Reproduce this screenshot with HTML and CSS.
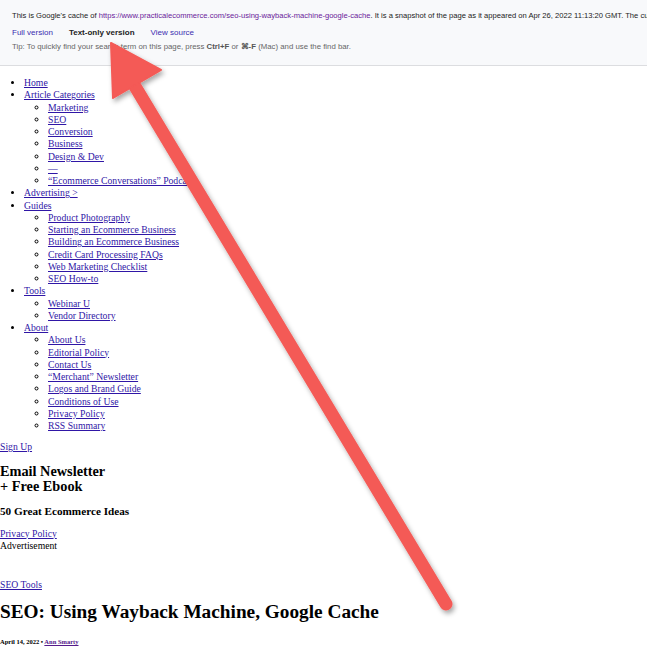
FILE: index.html
```html
<!DOCTYPE html>
<html>
<head>
<meta charset="utf-8">
<link rel="stylesheet" href="styles.css">
</head>
<body>
<div class="cache-bar">
  <div class="cache-line">This is Google's cache of <a class="cache-url" href="#">https://www.practicalecommerce.com/seo-using-wayback-machine-google-cache</a>. It is a snapshot of the page as it appeared on Apr 26, 2022 11:13:20 GMT. The current page could have changed in the meantime.</div>
  <div class="cache-links"><a href="#">Full version</a><span class="current">Text-only version</span><a href="#">View source</a></div>
  <div class="cache-tip">Tip: To quickly find your search term on this page, press <b>Ctrl+F</b> or <b>⌘-F</b> (Mac) and use the find bar.</div>
</div>

<div class="page">
  <nav class="menu">
    <ul class="lvl1">
      <li><a href="#">Home</a></li>
      <li><a href="#">Article Categories</a>
        <ul class="lvl2">
          <li><a href="#">Marketing</a></li>
          <li><a href="#">SEO</a></li>
          <li><a href="#">Conversion</a></li>
          <li><a href="#">Business</a></li>
          <li><a href="#">Design &amp; Dev</a></li>
          <li><a href="#">—</a></li>
          <li><a href="#">“Ecommerce Conversations” Podcast</a></li>
        </ul>
      </li>
      <li><a href="#">Advertising &gt;</a></li>
      <li><a href="#">Guides</a>
        <ul class="lvl2">
          <li><a href="#">Product Photography</a></li>
          <li><a href="#">Starting an Ecommerce Business</a></li>
          <li><a href="#">Building an Ecommerce Business</a></li>
          <li><a href="#">Credit Card Processing FAQs</a></li>
          <li><a href="#">Web Marketing Checklist</a></li>
          <li><a href="#">SEO How-to</a></li>
        </ul>
      </li>
      <li><a href="#">Tools</a>
        <ul class="lvl2">
          <li><a href="#">Webinar U</a></li>
          <li><a href="#">Vendor Directory</a></li>
        </ul>
      </li>
      <li><a href="#">About</a>
        <ul class="lvl2">
          <li><a href="#">About Us</a></li>
          <li><a href="#">Editorial Policy</a></li>
          <li><a href="#">Contact Us</a></li>
          <li><a href="#">“Merchant” Newsletter</a></li>
          <li><a href="#">Logos and Brand Guide</a></li>
          <li><a href="#">Conditions of Use</a></li>
          <li><a href="#">Privacy Policy</a></li>
          <li><a href="#">RSS Summary</a></li>
        </ul>
      </li>
    </ul>
  </nav>

  <div class="signup"><a href="#">Sign Up</a></div>
  <h2 class="news-title">Email Newsletter<br>+ Free Ebook</h2>
  <h3 class="news-sub">50 Great Ecommerce Ideas</h3>
  <div class="privacy"><a href="#">Privacy Policy</a></div>
  <div class="ad">Advertisement</div>

  <div class="crumb"><a href="#">SEO Tools</a></div>
  <h1 class="title">SEO: Using Wayback Machine, Google Cache</h1>
  <div class="meta">April 14, 2022 • <a href="#">Ann Smarty</a></div>
</div>

<svg class="arrow" width="647" height="664" viewBox="0 0 647 664">
  <defs>
    <filter id="shadow" x="-20%" y="-20%" width="140%" height="140%">
      <feDropShadow dx="2" dy="3" stdDeviation="2.5" flood-color="#000" flood-opacity="0.35"/>
    </filter>
  </defs>
  <g filter="url(#shadow)" fill="#f45a56" stroke="#f45a56">
    <line x1="130" y1="78" x2="446" y2="604" stroke-width="13" stroke-linecap="round"/>
    <polygon points="111,43 161,70 113,98" stroke-width="2" stroke-linejoin="round"/>
  </g>
</svg>
</body>
</html>
```

FILE: styles.css
```css
html, body {
  margin: 0;
  padding: 0;
  background: #fff;
}
body {
  width: 647px;
  height: 664px;
  overflow: hidden;
  position: relative;
  font-family: "Liberation Serif", "Times New Roman", serif;
  color: #000;
}
a {
  color: #2f16a6;
  text-decoration: underline;
}

.cache-bar {
  background: #f8f9fb;
  border-bottom: 1px solid #dcdde0;
  height: 66px;
  box-sizing: border-box;
  padding: 11px 0 0 12px;
  font-family: "Liberation Sans", Arial, sans-serif;
  font-size: 8px;
  color: #222;
  white-space: nowrap;
  overflow: hidden;
}
.cache-line {
  font-size: 7.6px;
  line-height: 10px;
}
.cache-url {
  color: #6a1a9a;
  text-decoration: none;
}
.cache-links {
  display: flex;
  gap: 16px;
  line-height: 10px;
  margin-top: 7px;
}
.cache-links a {
  color: #3a2eb0;
  text-decoration: none;
}
.cache-links .current {
  font-weight: bold;
  color: #222;
}
.cache-tip {
  font-size: 7.8px;
  line-height: 10px;
  margin-top: 4px;
  color: #666;
}
.cache-tip b {
  color: #555;
}

.page {
  font-size: 9.7px;
  line-height: 12.25px;
}
.menu {
  width: 187px;
  overflow: hidden;
  white-space: nowrap;
}
.lvl1 {
  margin: 11px 0 0 0;
  padding-left: 24px;
  list-style: disc;
}
.lvl2 {
  margin: 0;
  padding-left: 24px;
  list-style: circle;
}
.signup {
  margin-top: 9px;
}
.news-title {
  margin: 10px 0 0 0;
  font-size: 14.3px;
  line-height: 15px;
  font-weight: bold;
}
.news-sub {
  margin: 11px 0 0 0;
  font-size: 11.2px;
  line-height: 13px;
  font-weight: bold;
}
.privacy {
  margin-top: 10px;
}
.crumb {
  margin-top: 27px;
}
.title {
  margin: 9px 0 0 0;
  font-size: 19.3px;
  line-height: 24px;
  font-weight: bold;
}
.meta {
  margin-top: 14px;
  font-size: 6.5px;
  line-height: 8px;
  font-weight: bold;
}
.meta a {
  color: #551a8b;
}

.arrow {
  position: absolute;
  left: 0;
  top: 0;
  pointer-events: none;
}
```
